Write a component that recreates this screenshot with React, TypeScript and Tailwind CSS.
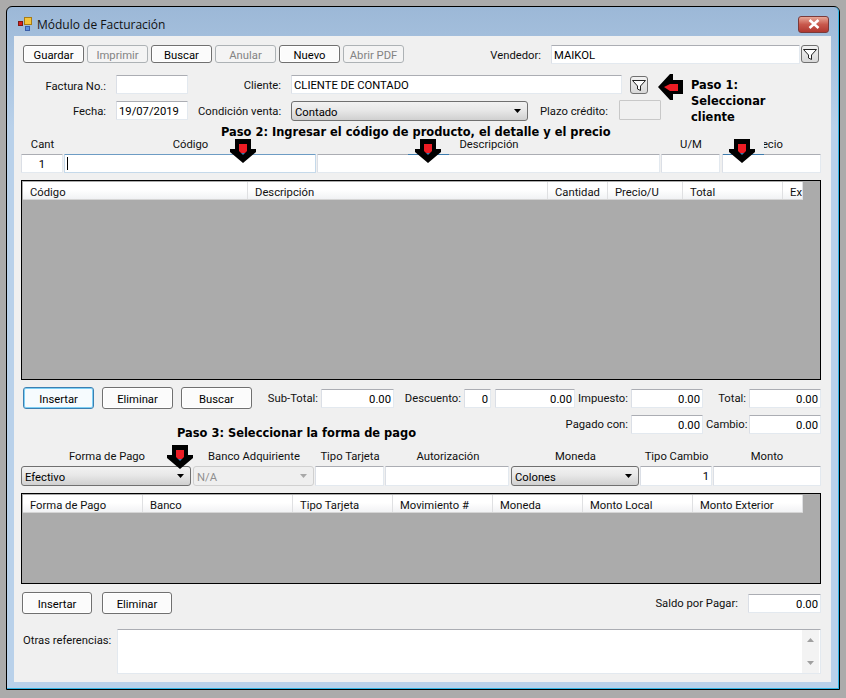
import React from "react";

const tb = "h-[19px] shrink-0 rounded-[1px] border border-[#e3e9ef] border-t-[#abadb3] border-l-[#dbdfe6] bg-white px-[2px] pt-[2px] text-[11.25px] leading-[15px] text-black overflow-hidden whitespace-nowrap";

function Box({ className = "", children, right }: { className?: string; children?: React.ReactNode; right?: boolean }) {
  return <div className={`${tb} ${right ? "text-right" : ""} ${className}`}>{children}</div>;
}

function Btn({ className = "", children, disabled, focus }: { className?: string; children: React.ReactNode; disabled?: boolean; focus?: boolean }) {
  const tone = disabled
    ? "border-[#adb2b5] text-[#838383] bg-[#f4f4f4]"
    : focus
    ? "border-[#3c7fb1] text-black bg-[#f6fbfe] shadow-[inset_0_0_0_1px_#7ed0f5]"
    : "border-[#707070] text-black bg-[#fbfbfb] shadow-[inset_0_0_0_1px_#ffffff]";
  return (
    <div className={`flex shrink-0 items-center justify-center rounded-[3px] border pt-[4px] text-[11.25px] leading-[12px] ${tone} ${className}`}>
      {children}
    </div>
  );
}

function Lbl({ className = "", children }: { className?: string; children: React.ReactNode }) {
  return <div className={`shrink-0 whitespace-nowrap pt-[1px] text-right text-[11.25px] leading-[16px] text-[#111] ${className}`}>{children}</div>;
}

function Combo({ className = "", value, disabled }: { className?: string; value: string; disabled?: boolean }) {
  const tone = disabled
    ? "border-[#d0d0d0] bg-[#efefef] text-[#8f8f8f]"
    : "border-[#707070] bg-[linear-gradient(#f2f2f2,#e8e8e8_45%,#d0d0d0)] text-black";
  return (
    <div className={`flex h-[20px] shrink-0 items-center justify-between rounded-[3px] border pl-[3px] pr-[5px] text-[11.25px] ${tone} ${className}`}>
      <span className="pt-[4px] leading-[14px]">{value}</span>
      <svg width="8" height="4" viewBox="0 0 8 4">
        <path d="M0 0H7L3.5 4Z" fill={disabled ? "#a8a8a8" : "#000"} />
      </svg>
    </div>
  );
}

function Funnel({ className = "" }: { className?: string }) {
  return (
    <div className={`flex h-[18px] w-[18px] shrink-0 items-center justify-center rounded-[3px] border border-[#707070] bg-[linear-gradient(#f2f2f2,#d8d8d8)] ${className}`}>
      <svg width="14" height="13" viewBox="0 0 14 13" fill="none">
        <path d="M0.5 1.5H13.5L8.5 7V11.5L5.5 10V7Z" fill="#fff" stroke="#222" strokeWidth="1" />
      </svg>
    </div>
  );
}

function DownArrow({ className = "" }: { className?: string }) {
  return (
    <svg className={`absolute ${className}`} width="26" height="24" viewBox="0 0 26 24">
      <path d="M5 0H21V10H26V13L13 24L0 13V10H5Z" fill="#000" />
      <path d="M11 14H15L13 16Z" fill="#3d7bad" />
      <path d="M9 5H17V12L15 14H11L9 12Z" fill="#ed1c24" />
    </svg>
  );
}

function LeftArrow({ className = "" }: { className?: string }) {
  return (
    <svg className={`absolute ${className}`} width="26" height="26" viewBox="0 0 26 26">
      <path d="M0 13L12 0H15V6H25V20H15V26H12Z" fill="#000" />
      <path d="M6 13L12 10H20V17H12Z" fill="#ed1c24" />
    </svg>
  );
}

function Grid({ className = "", cols }: { className?: string; cols: [string, string][] }) {
  return (
    <div className={`ml-[7px] w-[800px] shrink-0 border border-black bg-[#ababab] p-px ${className}`}>
      <div className="flex h-[18px] w-[780px] overflow-hidden border-b border-[#d5d5d5] bg-[linear-gradient(#ffffff,#ffffff_45%,#f1f2f4)]">
        {cols.map(([t, w]) => (
          <div key={t} className={`h-full shrink-0 overflow-hidden whitespace-nowrap border-r border-[#dfe0e2] pl-[7px] pt-[3px] text-[11.25px] leading-[15px] text-[#111] ${w}`}>
            {t}
          </div>
        ))}
      </div>
    </div>
  );
}

const head = "whitespace-nowrap font-['DejaVu_Sans'] text-[11.45px] font-bold text-black";
const colLabel = "shrink-0 text-center text-[11.25px] leading-[12px] text-[#111] whitespace-nowrap";

export default function App() {
  return (
    <div className="h-[698px] w-[846px] overflow-hidden bg-[#ababab] pl-[6px] pt-[6px] font-['Roboto',sans-serif]">
      <div className="h-[684px] w-[834px] rounded-t-[6px] border border-black bg-[linear-gradient(#9cb8d7,#b9d1ea_120px)]">
        <div className="h-[682px] w-[832px] rounded-t-[5px] border-b border-r border-[#30b4e4]">
          {/* title bar */}
          <div className="flex h-[29px] items-center pl-[11px] pt-[5px]">
            <svg width="14" height="14" viewBox="0 0 14 14">
              <rect x="0.5" y="4.5" width="4" height="4" fill="#d8201c" stroke="#7a1a14" strokeWidth="1" />
              <rect x="6.5" y="0.5" width="7" height="7" fill="#f4c63c" stroke="#a87c14" strokeWidth="1" />
              <rect x="7.5" y="9.5" width="4" height="4" fill="#5a90e0" stroke="#3a5ea8" strokeWidth="1" />
            </svg>
            <span className="ml-[5px] mt-[1px] font-['Open_Sans'] text-[12px] text-[#111]">Módulo de Facturación</span>
            <div className="ml-auto mr-[9px] flex h-[17px] w-[31px] items-center justify-center rounded-[3px] border border-[#7a3a3a] bg-[linear-gradient(#e8a898,#c8584c_50%,#b03830)]">
              <svg width="12" height="10" viewBox="0 0 12 10">
                <path d="M1.5 1L10.5 9M10.5 1L1.5 9" stroke="#fff" strokeWidth="2.6" />
              </svg>
            </div>
          </div>
          {/* client */}
          <div className="relative ml-[7px] flex h-[646px] w-[817px] flex-col bg-[#f0f0f0]">
            {/* row 1 */}
            <div className="mt-[9px] flex h-[19px] items-start">
              <Btn className="ml-[9px] h-[18px] w-[61px]">Guardar</Btn>
              <Btn disabled className="ml-[3px] h-[18px] w-[61px]">Imprimir</Btn>
              <Btn className="ml-[3px] h-[18px] w-[61px]">Buscar</Btn>
              <Btn disabled className="ml-[3px] h-[18px] w-[61px]">Anular</Btn>
              <Btn className="ml-[3px] h-[18px] w-[61px]">Nuevo</Btn>
              <Btn disabled className="ml-[3px] h-[18px] w-[61px]">Abrir PDF</Btn>
              <Lbl className="ml-[60px] mt-[2px] w-[77px]">Vendedor:</Lbl>
              <Box className="ml-[10px] w-[249px]">MAIKOL</Box>
              <Funnel className="ml-px" />
            </div>
            {/* row 2 */}
            <div className="mt-[11px] flex h-[19px] items-start">
              <Lbl className="mt-[3px] w-[92px]">Factura No.:</Lbl>
              <Box className="ml-[10px] w-[72px]" />
              <Lbl className="ml-[10px] mt-[2px] w-[83px]">Cliente:</Lbl>
              <Box className="ml-[10px] w-[331px]">CLIENTE DE CONTADO</Box>
              <Funnel className="ml-[8px] mt-px" />
            </div>
            {/* row 3 */}
            <div className="mt-[7px] flex h-[20px] items-start">
              <Lbl className="mt-[2px] w-[92px]">Fecha:</Lbl>
              <Box className="ml-[10px] w-[72px]">19/07/2019</Box>
              <Lbl className="ml-[10px] mt-[2px] w-[83px]">Condición venta:</Lbl>
              <Combo className="ml-[10px] w-[237px]" value="Contado" />
              <Lbl className="ml-[10px] mt-[2px] w-[70px]">Plazo crédito:</Lbl>
              <Box className="-mt-px ml-[11px] w-[42px] !bg-[#f0f0f0] !border-[#c8c8c8] !h-[20px]" />
            </div>
            {/* paso 2 */}
            <div className={`mt-[5px] h-[13px] pl-[207px] leading-[13px] ${head}`}>Paso 2: Ingresar el código de producto, el detalle y el precio</div>
            <div className="flex h-[15px] pl-[7px]">
              <div className={`w-[43px] ${colLabel}`}>Cant</div>
              <div className={`w-[253px] ${colLabel}`}>Código</div>
              <div className={`w-[344px] ${colLabel}`}>Descripción</div>
              <div className={`w-[60px] ${colLabel}`}>U/M</div>
              <div className={`w-[92px] ${colLabel}`}>Precio</div>
            </div>
            <div className="flex h-[19px] pl-[7px]">
              <Box className="w-[42px] text-center">1</Box>
              <div className="ml-px flex h-[19px] w-[252px] shrink-0 items-center rounded-[1px] border border-[#c5d9ea] border-t-[#6d9cc4] bg-white pl-[2px]">
                <div className="h-[13px] w-px bg-black" />
              </div>
              <Box className="ml-px w-[343px]" />
              <Box className="ml-px w-[59px]" />
              <Box className="ml-[2px] w-[99px]" />
            </div>
            {/* grid 1 */}
            <Grid
              className="mt-[7px] h-[200px]"
              cols={[
                ["Código", "w-[225px]"],
                ["Descripción", "w-[300px]"],
                ["Cantidad", "w-[60px]"],
                ["Precio/U", "w-[75px]"],
                ["Total", "w-[100px]"],
                ["Ex", "w-[20px]"],
              ]}
            />
            {/* buttons + totals */}
            <div className="mt-[7px] flex h-[22px] items-start">
              <Btn focus className="ml-[9px] h-[22px] w-[71px]">Insertar</Btn>
              <Btn className="ml-[8px] h-[22px] w-[71px]">Eliminar</Btn>
              <Btn className="ml-[8px] h-[22px] w-[71px]">Buscar</Btn>
              <Lbl className="ml-[9px] mt-[3px] w-[57px]">Sub-Total:</Lbl>
              <Box right className="ml-[3px] mt-[2px] w-[73px]">0.00</Box>
              <Lbl className="ml-[3px] mt-[3px] w-[64px]">Descuento:</Lbl>
              <Box right className="ml-[3px] mt-[2px] w-[27px]">0</Box>
              <Box right className="ml-[4px] mt-[2px] w-[80px]">0.00</Box>
              <Lbl className="ml-[2px] mt-[3px] w-[51px]">Impuesto:</Lbl>
              <Box right className="ml-[3px] mt-[2px] w-[72px]">0.00</Box>
              <Lbl className="ml-[3px] mt-[3px] w-[40px]">Total:</Lbl>
              <Box right className="ml-[3px] mt-[2px] w-[72px]">0.00</Box>
            </div>
            {/* paso 3 + pagado */}
            <div className="mt-[6px] flex h-[25px] items-start">
              <div className={`ml-[163px] mt-[11px] w-[362px] shrink-0 leading-[14px] ${head}`}>Paso 3: Seleccionar la forma de pago</div>
              <Lbl className="mt-[1px] w-[89px]">Pagado con:</Lbl>
              <Box right className="ml-[3px] w-[72px]">0.00</Box>
              <Lbl className="ml-[3px] mt-[1px] w-[40px]">Cambio:</Lbl>
              <Box right className="ml-[3px] w-[72px]">0.00</Box>
            </div>
            {/* payment labels */}
            <div className="mt-[11px] flex h-[15px] pl-[7px]">
              <div className={`w-[172px] ${colLabel}`}>Forma de Pago</div>
              <div className={`w-[122px] ${colLabel}`}>Banco Adquiriente</div>
              <div className={`w-[70px] ${colLabel}`}>Tipo Tarjeta</div>
              <div className={`w-[126px] ${colLabel}`}>Autorización</div>
              <div className={`w-[129px] ${colLabel}`}>Moneda</div>
              <div className={`w-[73px] ${colLabel}`}>Tipo Cambio</div>
              <div className={`w-[108px] ${colLabel}`}>Monto</div>
            </div>
            <div className="flex h-[20px] pl-[7px]">
              <Combo className="w-[170px]" value="Efectivo" />
              <Combo disabled className="ml-[2px] w-[121px]" value="N/A" />
              <Box className="ml-px !h-[20px] w-[69px]" />
              <Box className="ml-px !h-[20px] w-[124px]" />
              <Combo className="ml-[2px] w-[128px]" value="Colones" />
              <Box right className="ml-px !h-[20px] w-[72px]">1</Box>
              <Box className="ml-px !h-[20px] w-[108px]" />
            </div>
            {/* grid 2 */}
            <Grid
              className="mt-[7px] h-[91px]"
              cols={[
                ["Forma de Pago", "w-[120px]"],
                ["Banco", "w-[150px]"],
                ["Tipo Tarjeta", "w-[100px]"],
                ["Movimiento #", "w-[100px]"],
                ["Moneda", "w-[90px]"],
                ["Monto Local", "w-[110px]"],
                ["Monto Exterior", "w-[110px]"],
              ]}
            />
            {/* bottom buttons */}
            <div className="mt-[8px] flex h-[22px] items-start">
              <Btn className="ml-[8px] h-[22px] w-[70px]">Insertar</Btn>
              <Btn className="ml-[10px] h-[22px] w-[70px]">Eliminar</Btn>
              <Lbl className="ml-auto mt-[3px]">Saldo por Pagar:</Lbl>
              <Box right className="ml-[10px] mr-[10px] mt-[2px] w-[73px]">0.00</Box>
            </div>
            {/* otras */}
            <div className="mt-[15px] flex h-[45px] items-start">
              <Lbl className="ml-[9px] mt-[3px] w-[94px] !text-left">Otras referencias:</Lbl>
              <div className="flex h-[45px] w-[704px] shrink-0 justify-end rounded-[1px] border border-[#e3e9ef] border-t-[#abadb3] bg-white pr-px">
                <div className="flex w-[17px] flex-col items-center justify-between bg-[#f3f3f3] py-[8px]">
                  <svg width="7" height="4" viewBox="0 0 7 4"><path d="M0 4H7L3.5 0Z" fill="#a0a0a0" /></svg>
                  <svg width="7" height="4" viewBox="0 0 7 4"><path d="M0 0H7L3.5 4Z" fill="#a0a0a0" /></svg>
                </div>
              </div>
            </div>

            {/* annotations over the form */}
            <div className={`absolute left-[677px] top-[41px] w-[110px] leading-[16px] ${head}`}>
              Paso 1:<br />Seleccionar<br />cliente
            </div>
            <LeftArrow className="left-[644px] top-[38px]" />
            <div className="absolute left-[394px] top-[118px] h-px w-[41px] bg-[#3d7bad]" />
            <div className="absolute left-[709px] top-[103px] h-[16px] w-[41px] border-b border-[#3d7bad] bg-[#f0f0f0]" />
            <DownArrow className="left-[216px] top-[103px]" />
            <DownArrow className="left-[401px] top-[103px]" />
            <DownArrow className="left-[715px] top-[103px]" />
            <DownArrow className="left-[153px] top-[409px]" />
          </div>
        </div>
      </div>
    </div>
  );
}
